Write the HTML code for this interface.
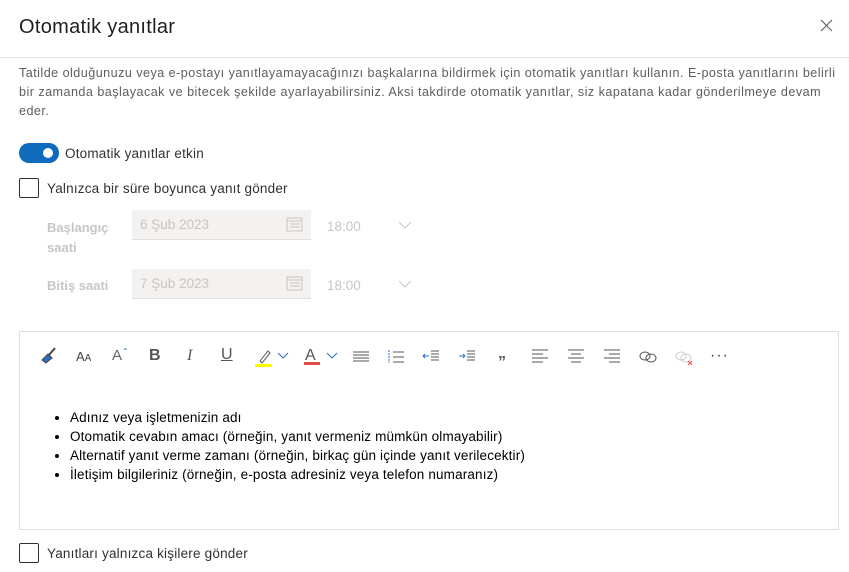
<!DOCTYPE html><html><head><meta charset="utf-8"><style>
*{box-sizing:border-box;margin:0;padding:0}
body{width:849px;height:572px;background:#fff;font-family:"Segoe UI","Liberation Sans",sans-serif;color:#323130;position:relative;overflow:hidden;font-size:13px}
.a{position:absolute}
.title{left:19px;top:16px;font-size:20px;color:#201f1e;letter-spacing:0.3px}
.hr{left:0;top:57px;width:849px;height:1px;background:#e1dfdd}
.desc{left:19px;top:64px;width:830px;line-height:19px;font-size:12.6px;color:#605e5c;letter-spacing:0.46px;white-space:nowrap}
.cb{width:20px;height:20px;border:1px solid #323130;border-radius:2px}
.lbl{font-size:13.5px;letter-spacing:0.2px}
.dis{color:#c8c6c4;font-weight:bold;font-size:13px}
.date{width:179px;height:30px;background:#f3f2f1;border-bottom:1px solid #e1dfdd;color:#c8c6c4;padding:7px 8px;font-size:13.5px}
.tm{color:#c8c6c4;font-size:13.5px}
.ed{left:19px;top:331px;width:820px;height:199px;border:1px solid #e1dfdd}
.tb svg{position:absolute;top:345px}
ul{position:absolute;left:70px;top:408px;font-size:13.5px;line-height:19px;color:#000;letter-spacing:0.15px}
</style></head><body>
<div class="a title">Otomatik yanıtlar</div>
<svg class="a" style="left:820px;top:19px" width="13" height="13"><path d="M1 1L12 12M12 1L1 12" stroke="#605e5c" stroke-width="1.1"/></svg>
<div class="a hr"></div>
<div class="a desc">Tatilde olduğunuzu veya e-postayı yanıtlayamayacağınızı başkalarına bildirmek için otomatik yanıtları kullanın. E-posta yanıtlarını belirli<br>bir zamanda başlayacak ve bitecek şekilde ayarlayabilirsiniz. Aksi takdirde otomatik yanıtlar, siz kapatana kadar gönderilmeye devam<br>eder.</div>
<div class="a" style="left:19px;top:143px;width:40px;height:20px;border-radius:10px;background:#0f6cbd"></div>
<div class="a" style="left:43px;top:148px;width:10px;height:10px;border-radius:5px;background:#fff"></div>
<div class="a lbl" style="left:65px;top:146px">Otomatik yanıtlar etkin</div>
<div class="a cb" style="left:19px;top:178px"></div>
<div class="a lbl" style="left:47px;top:181px">Yalnızca bir süre boyunca yanıt gönder</div>
<div class="a dis" style="left:47px;top:218px;line-height:20px">Başlangıç<br>saati</div>
<div class="a date" style="left:132px;top:210px">6 Şub 2023</div>
<div class="a tm" style="left:327px;top:219px">18:00</div>
<div class="a dis" style="left:47px;top:278px">Bitiş saati</div>
<div class="a date" style="left:132px;top:269px">7 Şub 2023</div>
<div class="a tm" style="left:327px;top:278px">18:00</div>
<svg class="a" style="left:286px;top:216px" width="17" height="17"><rect x="1" y="2" width="15" height="13" fill="none" stroke="#c8c6c4"/><path d="M1 5H16M4 8h10M4 11h10" stroke="#c8c6c4"/></svg>
<svg class="a" style="left:286px;top:275px" width="17" height="17"><rect x="1" y="2" width="15" height="13" fill="none" stroke="#c8c6c4"/><path d="M1 5H16M4 8h10M4 11h10" stroke="#c8c6c4"/></svg>
<svg class="a" style="left:398px;top:221px" width="14" height="8"><path d="M1 1l6 6 6-6" fill="none" stroke="#c8c6c4"/></svg>
<svg class="a" style="left:398px;top:280px" width="14" height="8"><path d="M1 1l6 6 6-6" fill="none" stroke="#c8c6c4"/></svg>
<div class="a ed"></div>
<div class="tb">
<svg style="left:40px" width="18" height="22"><path d="M15 3L9 10" stroke="#444" stroke-width="2"/><path d="M2 15l6-6 4 4-6 5z" fill="#2b6fc2" stroke="#444"/></svg>
<div class="a" style="left:76px;top:349px;font-size:13px;color:#444">A<span style="font-size:10px">A</span></div>
<div class="a" style="left:112px;top:347px;font-size:15px;color:#666">A<span style="font-size:8px;vertical-align:top;color:#2b6fc2">⌃</span></div>
<div class="a" style="left:149px;top:347px;font-size:16px;font-weight:bold;color:#555">B</div>
<div class="a" style="left:187px;top:347px;font-size:16px;font-style:italic;color:#555;font-family:'Liberation Serif',serif">I</div>
<div class="a" style="left:221px;top:346px;font-size:16px;text-decoration:underline;color:#555">U</div>
<svg style="left:255px" width="40" height="24"><path d="M5 16l8-10 2 2-8 10z" fill="none" stroke="#555"/><rect x="0" y="19" width="17" height="3" fill="#ffff00"/><path d="M23 8l5 5 5-5" fill="none" stroke="#2b6fc2"/></svg>
<div class="a" style="left:305px;top:347px;font-size:16px;color:#555">A</div>
<div class="a" style="left:304px;top:362px;width:16px;height:3px;background:#e34c4c"></div>
<svg style="left:326px" width="14" height="24"><path d="M1 8l5 5 5-5" fill="none" stroke="#2b6fc2"/></svg>
<svg style="left:352px" width="18" height="22"><path d="M1 7h16M1 10h16M1 13h16M1 16h16" stroke="#555"/></svg>
<svg style="left:387px" width="18" height="22"><path d="M2 5v13" stroke="#2b6fc2" stroke-dasharray="2 1"/><path d="M6 7h11M6 12h11M6 17h11" stroke="#555"/></svg>
<svg style="left:422px" width="18" height="22"><path d="M1 11h6M1 11l2-2M1 11l2 2" stroke="#2b6fc2"/><path d="M9 6h8M9 9h8M9 12h8M9 15h8" stroke="#555"/></svg>
<svg style="left:458px" width="18" height="22"><path d="M1 11h6M7 11l-2-2M7 11l-2 2" stroke="#2b6fc2"/><path d="M9 6h8M9 9h8M9 12h8M9 15h8" stroke="#555"/></svg>
<div class="a" style="left:498px;top:345px;font-size:16px;font-weight:bold;color:#555">„</div>
<svg style="left:531px" width="18" height="22"><path d="M1 5h16M1 9h11M1 13h16M1 17h11" stroke="#555"/></svg>
<svg style="left:567px" width="18" height="22"><path d="M1 5h16M4 9h10M1 13h16M4 17h10" stroke="#555"/></svg>
<svg style="left:603px" width="18" height="22"><path d="M1 5h16M6 9h11M1 13h16M6 17h11" stroke="#555"/></svg>
<svg style="left:638px" width="20" height="22"><ellipse cx="7" cy="11" rx="5" ry="4" fill="none" stroke="#555"/><ellipse cx="13" cy="13" rx="5" ry="4" fill="none" stroke="#555"/></svg>
<svg style="left:674px" width="22" height="24"><ellipse cx="7" cy="11" rx="5" ry="4" fill="none" stroke="#ccc"/><ellipse cx="12" cy="13" rx="5" ry="4" fill="none" stroke="#ccc"/><path d="M14 16l4 4M18 16l-4 4" stroke="#e34c4c"/></svg>
<div class="a" style="left:710px;top:347px;font-size:16px;color:#444;letter-spacing:1px">···</div>
</div>
<ul><li>Adınız veya işletmenizin adı</li><li>Otomatik cevabın amacı (örneğin, yanıt vermeniz mümkün olmayabilir)</li><li>Alternatif yanıt verme zamanı (örneğin, birkaç gün içinde yanıt verilecektir)</li><li>İletişim bilgileriniz (örneğin, e-posta adresiniz veya telefon numaranız)</li></ul>
<div class="a cb" style="left:19px;top:543px"></div>
<div class="a lbl" style="left:47px;top:546px">Yanıtları yalnızca kişilere gönder</div>
</body></html>
